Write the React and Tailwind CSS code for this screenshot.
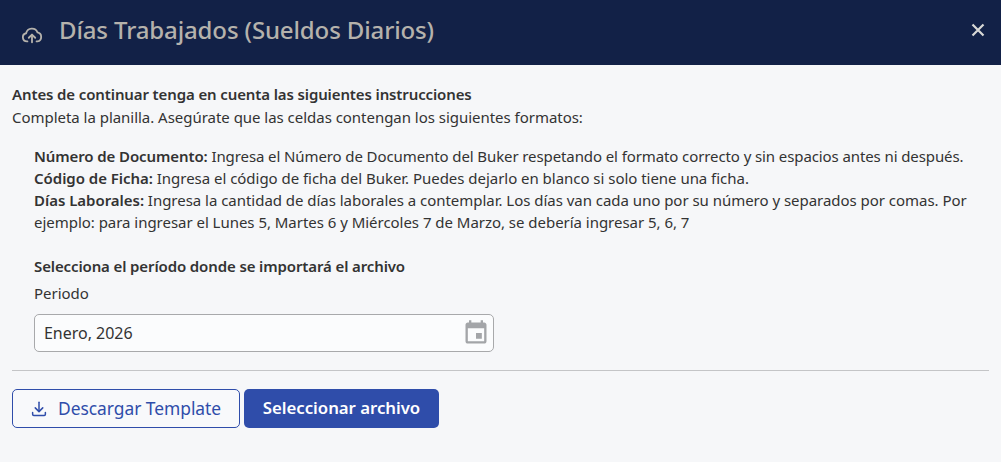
import React from "react";

const CloudUpload = () => (
  <svg className="w-[22px] h-[22px] mt-[11px] text-[#b5b2ac]" viewBox="0 0 24 24" fill="none" stroke="currentColor" strokeWidth="2" strokeLinecap="round" strokeLinejoin="round">
    <path d="M7 19H6.5A4.5 4.5 0 0 1 5.6 10.1 6.5 6.5 0 0 1 18 9.2 5 5 0 0 1 18 19h-1" />
    <path d="M12 20v-8" />
    <path d="M8.5 15 12 11.5 15.5 15" />
  </svg>
);

const CalendarIcon = () => (
  <svg className="w-[28px] h-[28px] text-[#a3a5a8]" viewBox="0 0 24 24" fill="currentColor">
    <path d="M17 12h-5v5h5v-5zM16 1v2H8V1H6v2H5c-1.11 0-1.99.9-1.99 2L3 19c0 1.1.89 2 2 2h14c1.1 0 2-.9 2-2V5c0-1.1-.9-2-2-2h-1V1h-2zm3 18H5V8h14v11z" />
  </svg>
);

const DownloadIcon = () => (
  <svg className="w-[18px] h-[18px]" viewBox="0 0 24 24" fill="none" stroke="currentColor" strokeWidth="2" strokeLinecap="round" strokeLinejoin="round">
    <path d="M12 3v12" />
    <path d="M7 10.5 12 15.5 17 10.5" />
    <path d="M3.5 16.5v2.5a1.5 1.5 0 0 0 1.5 1.5h14a1.5 1.5 0 0 0 1.5-1.5v-2.5" />
  </svg>
);

export default function App() {
  return (
    <div className="w-[1001px] h-[462px] overflow-hidden bg-[#f6f7f9] text-[#333333] font-['Noto_Sans',sans-serif]">
      <header className="h-[65px] bg-[#122147] flex items-center pl-[21px] pr-[15px] pb-[6px] text-[#b5b2ac]">
        <CloudUpload />
        <h1 className="ml-[16px] text-[24px] leading-[32px] font-medium tracking-[-0.13px] text-[#b5b2ac]">Días Trabajados (Sueldos Diarios)</h1>
        <button className="ml-auto w-[16px] h-[16px] text-[#d8d8d6]">
          <svg viewBox="0 0 16 16" className="w-[16px] h-[16px]" fill="none" stroke="currentColor" strokeWidth="2.2">
            <path d="M2.5 2.5 13.5 13.5M13.5 2.5 2.5 13.5" />
          </svg>
        </button>
      </header>

      <main className="px-[12px] pt-[18px] text-[15px] leading-[22.5px] tracking-[-0.03px]">
        <p className="font-semibold tracking-[-0.12px]">Antes de continuar tenga en cuenta las siguientes instrucciones</p>
        <p>Completa la planilla. Asegúrate que las celdas contengan los siguientes formatos:</p>

        <div className="pl-[22px] pt-[17px] leading-[22px]">
          <p className="tracking-[-0.1px]">
            <b className="font-semibold">Número de Documento:</b> Ingresa el Número de Documento del Buker respetando el formato correcto y sin espacios antes ni después.
          </p>
          <p>
            <b className="font-semibold">Código de Ficha:</b> Ingresa el código de ficha del Buker. Puedes dejarlo en blanco si solo tiene una ficha.
          </p>
          <p>
            <b className="font-semibold">Días Laborales:</b> Ingresa la cantidad de días laborales a contemplar. Los días van cada uno por su número y separados por comas. Por ejemplo: para ingresar el Lunes 5, Martes 6 y Miércoles 7 de Marzo, se debería ingresar 5, 6, 7
          </p>

          <p className="font-semibold mt-[22px] tracking-[-0.12px]">Selecciona el período donde se importará el archivo</p>
          <p className="mt-[5px]">Periodo</p>

          <div className="mt-[10px] w-[460px] h-[38px] flex items-center justify-between pl-[9px] pr-[3px] bg-[#fbfcfd] border border-[#a8a9ab] rounded-[5px]">
            <span className="text-[16px]">Enero, 2026</span>
            <CalendarIcon />
          </div>
        </div>

        <hr className="mt-[18px] border-t border-[#c4c5c7]" />

        <div className="mt-[18px] flex gap-[4px]">
          <button className="w-[228px] h-[39px] flex items-center pl-[17px] gap-[10px] bg-[#f8f9fb] border border-[#2f4daa] rounded-[5px] text-[#2f4daa] text-[17.4px]">
            <DownloadIcon />
            Descargar Template
          </button>
          <button className="w-[195px] h-[39px] bg-[#2f4daa] rounded-[5px] text-white text-[16.8px] font-semibold">
            Seleccionar archivo
          </button>
        </div>
      </main>
    </div>
  );
}
